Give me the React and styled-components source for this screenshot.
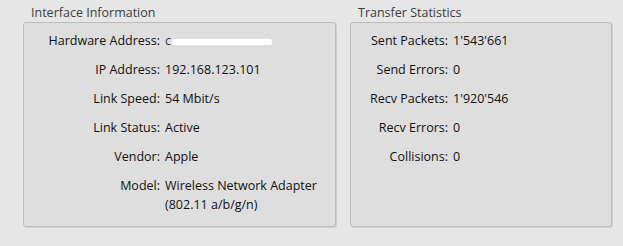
import React from "react";
import styled, { createGlobalStyle } from "styled-components";

const GlobalStyle = createGlobalStyle`
  html, body {
    margin: 0;
    padding: 0;
    background: #e6e6e6;
  }
  body {
    font-family: "Open Sans", "Noto Sans", sans-serif;
    width: 623px;
    height: 246px;
    overflow: hidden;
  }
`;

const interfaceInfo = [
  { label: "Hardware Address:", value: null },
  { label: "IP Address:", value: "192.168.123.101" },
  { label: "Link Speed:", value: "54 Mbit/s" },
  { label: "Link Status:", value: "Active" },
  { label: "Vendor:", value: "Apple" },
  { label: "Model:", value: "Wireless Network Adapter (802.11 a/b/g/n)" },
];

const transferStats = [
  { label: "Sent Packets:", value: "1'543'661" },
  { label: "Send Errors:", value: "0" },
  { label: "Recv Packets:", value: "1'920'546" },
  { label: "Recv Errors:", value: "0" },
  { label: "Collisions:", value: "0" },
];

const App = () => {
  return (
    <>
      <GlobalStyle />
      <Page>
        <Group width={313}>
          <Legend>Interface Information</Legend>
          <Box>
            <Fields labelWidth={136}>
              {interfaceInfo.map((row) => (
                <React.Fragment key={row.label}>
                  <Label>{row.label}</Label>
                  <Value>
                    {row.value === null ? (
                      <Redacted>
                        <span>c</span>
                        <Smudge />
                      </Redacted>
                    ) : (
                      row.value
                    )}
                  </Value>
                </React.Fragment>
              ))}
            </Fields>
          </Box>
        </Group>
        <Group width={262}>
          <Legend>Transfer Statistics</Legend>
          <Box>
            <Fields labelWidth={97}>
              {transferStats.map((row) => (
                <React.Fragment key={row.label}>
                  <Label>{row.label}</Label>
                  <Value>{row.value}</Value>
                </React.Fragment>
              ))}
            </Fields>
          </Box>
        </Group>
      </Page>
    </>
  );
};

const Page = styled.div`
  display: flex;
  gap: 14px;
  padding: 4px 11px 0 23px;
  height: 246px;
  box-sizing: border-box;
`;

const Group = styled.div`
  width: ${(p) => p.width}px;
  display: flex;
  flex-direction: column;
`;

const Legend = styled.div`
  font-size: 12.5px;
  line-height: 18px;
  color: #3d3d3d;
  padding-left: 8px;
`;

const Box = styled.div`
  height: 205px;
  box-sizing: border-box;
  background: #dedede;
  border: 1px solid #bcbcbc;
  border-radius: 3px;
  box-shadow: 1px 1px 0 #cfcfcf;
  padding-top: 8px;
`;

const Fields = styled.div`
  display: grid;
  grid-template-columns: ${(p) => p.labelWidth}px 1fr;
  column-gap: 5px;
  row-gap: 10px;
  font-size: 12.5px;
  line-height: 19px;
  color: #111;
`;

const Label = styled.div`
  text-align: right;
  white-space: nowrap;
`;

const Value = styled.div`
  padding-right: 8px;
`;

const Redacted = styled.span`
  display: inline-flex;
  align-items: center;
  gap: 1px;
  color: #333;
`;

const Smudge = styled.span`
  display: inline-block;
  width: 100px;
  height: 6px;
  margin-top: 2px;
  background: #fff;
  border-radius: 2px;
  filter: blur(0.6px);
`;

export default App;
